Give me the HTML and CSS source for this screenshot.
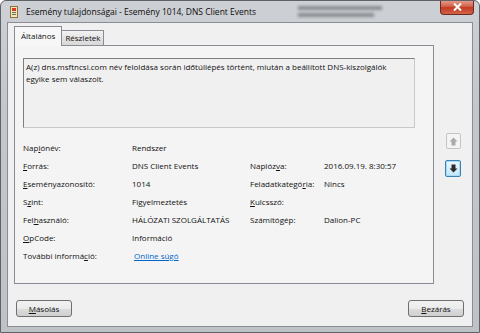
FILE: index.html
```html
<!DOCTYPE html>
<html>
<head>
    <link rel="stylesheet" href="styles.css">
</head>
<body>
    <div class="window">
        <div class="titlebar">
            <svg class="app-icon" width="8" height="12" viewBox="0 0 8 12">
                <rect x="0.5" y="0.5" width="7" height="11" fill="#f4e7b0" stroke="#8a7440"/>
                <rect x="2" y="2" width="4" height="3" fill="#d83a2a"/>
                <rect x="2" y="6" width="4" height="1" fill="#6a6a6a"/>
                <rect x="2" y="8" width="4" height="1" fill="#6a6a6a"/>
            </svg>
            <span class="title">Esemény tulajdonságai - Esemény 1014, DNS Client Events</span>
            <div class="glass-blur">
                <div class="blur-line"></div>
                <div class="blur-line blur-short"></div>
            </div>
            <div class="close-btn">
                <svg width="9" height="8" viewBox="0 0 9 8">
                    <path d="M1 0.5 L8 7.5 M8 0.5 L1 7.5" stroke="#fff" stroke-width="2"/>
                </svg>
            </div>
        </div>

        <div class="client">
            <div class="tabs">
                <div class="tab tab-active">Általános</div>
                <div class="tab">Részletek</div>
            </div>

            <div class="content-row">
                <div class="tab-panel">
                    <div class="message-box">A(z) dns.msftncsi.com név feloldása során időtúllépés történt, miután a beállított DNS-kiszolgálók egyike sem válaszolt.</div>

                    <div class="fields">
                        <div class="label">Nap<u>l</u>ónév:</div>
                        <div class="value">Rendszer</div>
                        <div></div>
                        <div></div>

                        <div class="label"><u>F</u>orrás:</div>
                        <div class="value">DNS Client Events</div>
                        <div class="label">Naplóz<u>v</u>a:</div>
                        <div class="value">2016.09.19. 8:30:57</div>

                        <div class="label"><u>E</u>seményazonosító:</div>
                        <div class="value">1014</div>
                        <div class="label">Feladatkategó<u>r</u>ia:</div>
                        <div class="value">Nincs</div>

                        <div class="label">S<u>z</u>int:</div>
                        <div class="value">Figyelmeztetés</div>
                        <div class="label"><u>K</u>ulcsszó:</div>
                        <div class="value"></div>

                        <div class="label">Fel<u>h</u>asználó:</div>
                        <div class="value">HÁLÓZATI SZOLGÁLTATÁS</div>
                        <div class="label">Számítógép:</div>
                        <div class="value">Dalion-PC</div>

                        <div class="label"><u>O</u>pCode:</div>
                        <div class="value">Információ</div>
                        <div></div>
                        <div></div>

                        <div class="label">További informá<u>c</u>ió:</div>
                        <div class="value"><a class="link" href="#">Online súgó</a></div>
                        <div></div>
                        <div></div>
                    </div>
                </div>

                <div class="side-buttons">
                    <div class="arrow-btn arrow-disabled">
                        <svg width="9" height="9" viewBox="0 0 9 9">
                            <path d="M4.5 0.5 L8.5 4.5 L6.5 4.5 L6.5 8.5 L2.5 8.5 L2.5 4.5 L0.5 4.5 Z" fill="#a9abad"/>
                        </svg>
                    </div>
                    <div class="arrow-btn arrow-focused">
                        <svg width="9" height="9" viewBox="0 0 9 9">
                            <path d="M4.5 8.5 L8.5 4.5 L6.5 4.5 L6.5 0.5 L2.5 0.5 L2.5 4.5 L0.5 4.5 Z" fill="#2b2b2b"/>
                        </svg>
                    </div>
                </div>
            </div>

            <div class="footer">
                <button class="btn"><u>M</u>ásolás</button>
                <button class="btn"><u>B</u>ezárás</button>
            </div>
        </div>
    </div>
</body>
</html>
```

FILE: styles.css
```css
body{
    margin: 0;
    background-color: #ffffff;
    font-family: 'Open Sans', 'Noto Sans', sans-serif;
    font-size: 8px;
    color: #111111;
}

u{
    text-decoration-thickness: 1px;
    text-underline-offset: 1px;
}

.window{
    width: 480px;
    height: 333px;
    box-sizing: border-box;
    background: linear-gradient(to bottom, #cdd0d4, #c4c7cb 30%, #bfc2c6);
    border: 1px solid #5f6368;
    border-radius: 6px 6px 0 0;
    display: flex;
    flex-direction: column;
    position: relative;
    overflow: hidden;
}

.titlebar{
    height: 21px;
    display: flex;
    align-items: center;
    padding-left: 9px;
    gap: 8px;
}
.app-icon{
    flex: none;
}
.title{
    font-size: 8.5px;
    color: #0c0c0c;
    white-space: nowrap;
}
.glass-blur{
    margin-left: 34px;
    display: flex;
    flex-direction: column;
    gap: 3px;
    filter: blur(1.4px);
    opacity: 0.6;
}
.blur-line{
    width: 84px;
    height: 4px;
    background-color: #60646a;
}
.blur-short{
    width: 76px;
}

.close-btn{
    position: absolute;
    top: -1px;
    right: 5px;
    width: 34px;
    height: 15px;
    box-sizing: border-box;
    border: 1px solid #6b2a20;
    border-top: none;
    border-radius: 0 0 4px 4px;
    background: linear-gradient(to bottom, #e6a394, #d2634b 45%, #c23b22 55%, #d2634a);
    display: flex;
    align-items: center;
    justify-content: center;
}

.client{
    flex: 1;
    margin: 0 6px 5px 6px;
    background-color: #f0f0f0;
    border: 1px solid #8a8e93;
    display: flex;
    flex-direction: column;
}

.tabs{
    display: flex;
    align-items: flex-end;
    padding: 3px 0 0 6px;
    height: 19px;
}
.tab{
    height: 15px;
    line-height: 14px;
    padding: 0 3px;
    box-sizing: border-box;
    border: 1px solid #898c95;
    border-bottom: none;
    background: linear-gradient(to bottom, #f3f3f3, #e3e3e3 50%, #d8d8d8);
    margin-left: -1px;
}
.tab-active{
    line-height: 18px;
    padding: 0 6px;
    background: #f7f7f7;
    margin-left: 0;
    position: relative;
    z-index: 1;
    margin-bottom: -1px;
    height: 20px;
}

.content-row{
    display: flex;
    height: 239px;
}
.tab-panel{
    flex: 1;
    border: 1px solid #898c95;
    background-color: #f4f4f4;
    margin-left: 6px;
    padding: 12px 18px 0 8px;
}
.message-box{
    height: 70px;
    box-sizing: border-box;
    border: 1px solid #7b7e82;
    border-right-color: #c9c9c9;
    border-bottom-color: #c9c9c9;
    background-color: #f0f0f0;
    padding: 2px 2px;
    line-height: 12px;
}

.fields{
    display: grid;
    grid-template-columns: 109px 118px 74px auto;
    grid-auto-rows: 18.1px;
    align-items: center;
    margin-top: 10px;
    white-space: nowrap;
}
.link{
    color: #0066cc;
    margin-left: 2px;
}

.side-buttons{
    width: 38px;
    display: flex;
    flex-direction: column;
    align-items: center;
    padding-top: 88px;
    gap: 11px;
}
.arrow-btn{
    width: 15px;
    height: 16px;
    box-sizing: border-box;
    border-radius: 2px;
    display: flex;
    align-items: center;
    justify-content: center;
}
.arrow-disabled{
    border: 1px solid #c3c5c8;
    background: #f4f4f4;
}
.arrow-focused{
    width: 16px;
    height: 17px;
    border: 1px solid #3c7fb1;
    box-shadow: inset 0 0 0 1px #a8dbf5;
    background: linear-gradient(to bottom, #eaf6fd, #d9f0fc 50%, #bee6fd);
}

.footer{
    flex: 1;
    display: flex;
    justify-content: space-between;
    align-items: flex-start;
    padding: 16px 8px 0 8px;
}
.btn{
    width: 56px;
    height: 17px;
    font-family: 'Open Sans', 'Noto Sans', sans-serif;
    font-size: 8px;
    color: #111111;
    border: 1px solid #707070;
    border-radius: 3px;
    background: linear-gradient(to bottom, #f2f2f2, #ebebeb 50%, #dddddd 51%, #cfcfcf);
    padding: 0;
    line-height: 14px;
}
```
